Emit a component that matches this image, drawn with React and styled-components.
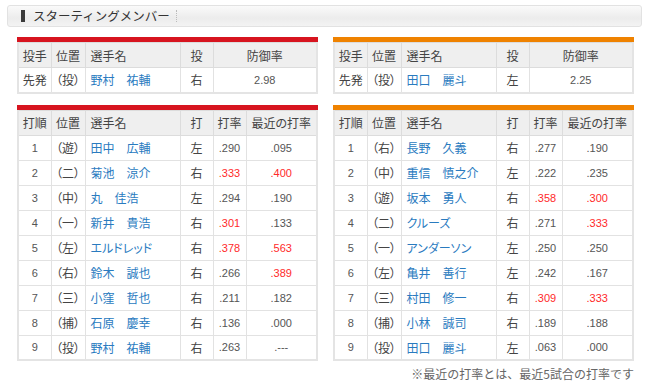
import styled, { createGlobalStyle } from 'styled-components'

const pitchers = [
    { role: '先発', pos: '（投）', name: '野村　祐輔', hand: '右', era: '2.98' },
    { role: '先発', pos: '（投）', name: '田口　麗斗', hand: '左', era: '2.25' },
]

const carp = [
    [1, '遊', '田中　広輔', '左', '.290', '.095'],
    [2, '二', '菊池　涼介', '右', '.333', '.400'],
    [3, '中', '丸　佳浩', '左', '.294', '.190'],
    [4, '一', '新井　貴浩', '右', '.301', '.133'],
    [5, '左', 'エルドレッド', '右', '.378', '.563'],
    [6, '右', '鈴木　誠也', '右', '.266', '.389'],
    [7, '三', '小窪　哲也', '右', '.211', '.182'],
    [8, '捕', '石原　慶幸', '右', '.136', '.000'],
    [9, '投', '野村　祐輔', '右', '.263', '.---'],
]

const giants = [
    [1, '右', '長野　久義', '右', '.277', '.190'],
    [2, '中', '重信　慎之介', '左', '.222', '.235'],
    [3, '遊', '坂本　勇人', '右', '.358', '.300'],
    [4, '二', 'クルーズ', '右', '.271', '.333'],
    [5, '一', 'アンダーソン', '左', '.250', '.250'],
    [6, '左', '亀井　善行', '左', '.242', '.167'],
    [7, '三', '村田　修一', '右', '.309', '.333'],
    [8, '捕', '小林　誠司', '右', '.189', '.188'],
    [9, '投', '田口　麗斗', '左', '.063', '.000'],
]

// .300 以上は赤
const isHot = v => v !== '.---' && parseFloat(v) >= 0.3

function Panel({ color, pitcher, lineup }) {
    return (
        <StylePanel>
            <StyleBar $color={color} />
            <StyleTable>
                <colgroup>
                    <col style={{ width: 33 }} />
                    <col style={{ width: 34 }} />
                    <col style={{ width: 95 }} />
                    <col style={{ width: 33 }} />
                    <col />
                </colgroup>
                <thead>
                    <tr>
                        <Th>投手</Th>
                        <Th>位置</Th>
                        <Th $left>選手名</Th>
                        <Th>投</Th>
                        <Th>防御率</Th>
                    </tr>
                </thead>
                <tbody>
                    <tr>
                        <Td>{pitcher.role}</Td>
                        <Td>{pitcher.pos}</Td>
                        <Td $left><Name>{pitcher.name}</Name></Td>
                        <Td>{pitcher.hand}</Td>
                        <Num>{pitcher.era}</Num>
                    </tr>
                </tbody>
            </StyleTable>

            <StyleBar $color={color} $gap />
            <StyleTable>
                <colgroup>
                    <col style={{ width: 33 }} />
                    <col style={{ width: 34 }} />
                    <col style={{ width: 95 }} />
                    <col style={{ width: 33 }} />
                    <col style={{ width: 33 }} />
                    <col />
                </colgroup>
                <thead>
                    <tr>
                        <Th>打順</Th>
                        <Th>位置</Th>
                        <Th $left>選手名</Th>
                        <Th>打</Th>
                        <Th>打率</Th>
                        <Th>最近の打率</Th>
                    </tr>
                </thead>
                <tbody>
                    {lineup.map(([no, pos, name, hand, avg, recent]) => (
                        <tr key={no}>
                            <Num>{no}</Num>
                            <Td>（{pos}）</Td>
                            <Td $left><Name>{name}</Name></Td>
                            <Td>{hand}</Td>
                            <Num $red={isHot(avg)}>{avg}</Num>
                            <Num $red={isHot(recent)}>{recent}</Num>
                        </tr>
                    ))}
                </tbody>
            </StyleTable>
        </StylePanel>
    )
}

function App() {
    return (
        <StylePage>
            <GlobalStyle />
            <StyleHeader>
                <StyleMark />
                <StyleTitle>スターティングメンバー</StyleTitle>
                <StyleDots />
            </StyleHeader>
            <StyleRow>
                <Panel color='#d7141f' pitcher={pitchers[0]} lineup={carp} />
                <Panel color='#ef8200' pitcher={pitchers[1]} lineup={giants} />
            </StyleRow>
            <StyleNote>※最近の打率とは、最近5試合の打率です</StyleNote>
        </StylePage>
    )
}

export default App

/**Style */

const GlobalStyle = createGlobalStyle`
body{
    margin: 0;
    background: #fff;
    font-family: "Noto Sans CJK JP", "Noto Sans", sans-serif;
    color: #333;
}
`
const StylePage = styled.div`
width: 650px;
height: 387px;
padding-top: 5px;
box-sizing: border-box;
`
const StyleHeader = styled.div`
display: flex;
align-items: center;
height: 22px;
margin: 0 8px 0 7px;
border: 1px solid #e2e2e2;
border-radius: 3px;
background: linear-gradient(#fafafa, #ececec 60%, #f3f3f3);
box-sizing: border-box;
`
const StyleMark = styled.span`
width: 4px;
height: 12px;
margin-left: 13px;
background: #3a3a3a;
`
const StyleTitle = styled.h2`
margin: 0 0 0 8px;
font-size: 12.5px;
font-weight: normal;
color: #333;
line-height: 1;
`
const StyleDots = styled.span`
height: 12px;
margin-left: 6px;
border-left: 1px dotted #bbb;
`
const StyleRow = styled.div`
display: flex;
gap: 15px;
padding-left: 17px;
margin-top: 10px;
`
const StylePanel = styled.div`
width: 301px;
`
const StyleBar = styled.div`
height: 5px;
margin-top: ${props => props.$gap ? '11px' : '0'};
background: ${props => props.$color};
`
const StyleTable = styled.table`
width: 100%;
border-collapse: collapse;
table-layout: fixed;
border: 2px solid #e4e4e4;
border-top: 0;
font-size: 12px;
font-feature-settings: "palt";

tr{
    height: 25px;
}
`
const Th = styled.th`
padding: 0 0 0 ${props => props.$left ? '5px' : '0'};
background: #efefef;
border: 1px solid #dcdcdc;
font-weight: normal;
color: #444;
text-align: ${props => props.$left ? 'left' : 'center'};
white-space: nowrap;
`
const Td = styled.td`
padding: 0 0 0 ${props => props.$left ? '5px' : '0'};
border: 1px solid #e2e2e2;
color: #444;
text-align: ${props => props.$left ? 'left' : 'center'};
white-space: nowrap;
`
const Num = styled(Td)`
font-family: "Liberation Sans", Arial, sans-serif;
font-size: 11px;
color: ${props => props.$red ? '#ff2a2a' : '#555'};
`
const Name = styled.a`
color: #2a7bbf;
text-decoration: none;
`
const StyleNote = styled.p`
margin: 4px 16px 0 0;
text-align: right;
font-size: 12px;
color: #666;
`
/****/
